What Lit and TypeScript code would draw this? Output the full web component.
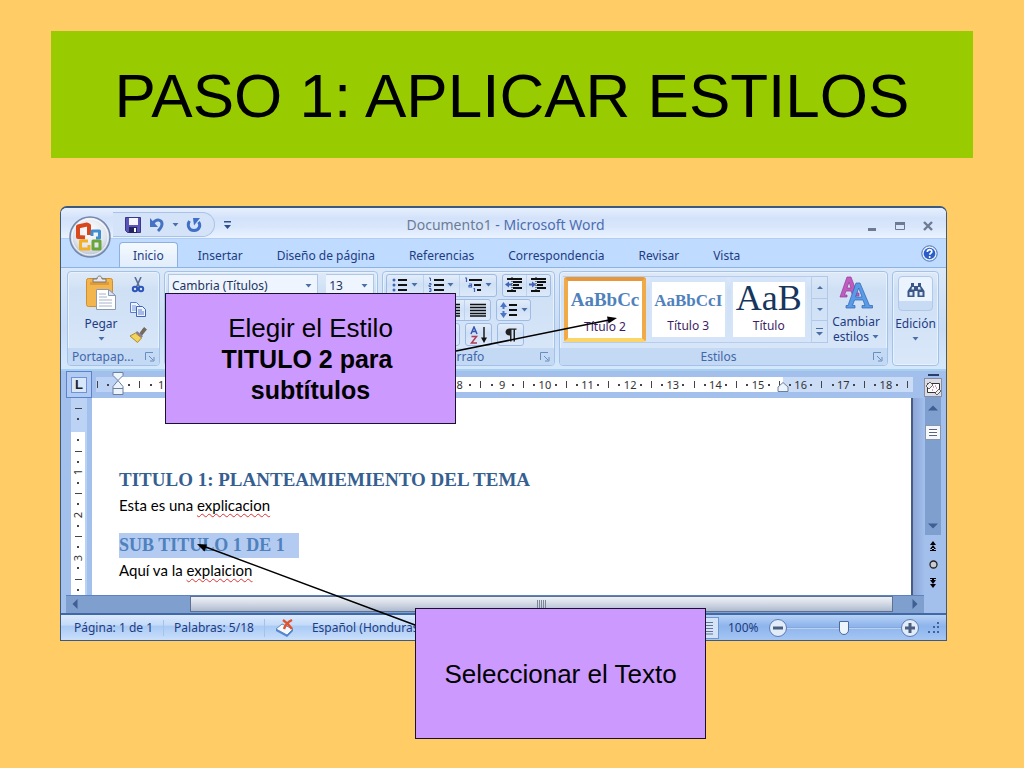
import { LitElement, html, css, svg } from "lit";
import { customElement } from "lit/decorators.js";

const caret = html`<svg class="caret" viewBox="0 0 7 4" width="7" height="4" aria-hidden="true"><path d="M.5 0h6L3.5 3.500z" fill="#4a6fa8"/></svg>`;

const launcher = html`<button class="plain launcher" aria-label="Más opciones"><svg width="10" height="10" viewBox="0 0 10 10"><path d="M.5 8V.5H8M4 4l4 4M9 5v4H5" fill="none" stroke="#6a8cbf"/></svg></button>`;

const bars = (rows: number[][]) =>
  svg`${rows.map(([x, y, w]) => svg`<rect x=${x} y=${y} width=${w} height="2" fill="#111"/>`)}`;

const icons = {
  save: html`<svg width="16" height="16" viewBox="0 0 16 16"><path d="M.5.5h15v15H2.5l-2-2z" fill="#5a55b8" stroke="#3a3688"/><path d="M4 1h9v7H4z" fill="#f4f6ff"/><path d="M4 10h8v6H4z" fill="#26235e"/><path d="M9 11h2v4H9z" fill="#fff"/></svg>`,
  undo: html`<svg width="16" height="16" viewBox="0 0 16 16"><path d="M4 6c4-5 9-3 9 1 0 3-2 5-4 7" fill="none" stroke="#4573c4" stroke-width="3"/><path d="M1 1v9h8z" fill="#4573c4"/></svg>`,
  redo: html`<svg width="16" height="16" viewBox="0 0 16 16"><path d="M3.500 4C1 8 2.500 13.500 8 13.500S15 8 12.500 5" fill="none" stroke="#3f6fc6" stroke-width="3"/><path d="M7 1h7L8 8.500z" fill="#3f6fc6"/></svg>`,
  qatMore: html`<svg width="7" height="8" viewBox="0 0 7 8"><path d="M0 0h7v1.500H0zM0 4h7L3.500 8z" fill="#2d4f8e"/></svg>`,
  galleryMore: html`<svg width="7" height="8" viewBox="0 0 7 8"><path d="M0 0h7v1H0zM0 4h7L3.500 7.500z" fill="#4a6fa8"/></svg>`,
  paste: html`<svg width="32" height="36" viewBox="0 0 32 36"><rect x="1.5" y="3.500" width="26" height="28" rx="2" fill="#f3b64e" stroke="#cf8f2e"/><path d="M5 7h19v3H5z" fill="#e09a38"/><path d="M8 7V4h4c0-4 5-4 5 0h4v3z" fill="#e8e8ea" stroke="#777"/><path d="M11.500 14.500h12l7 6v14h-19z" fill="#fff" stroke="#8a9ab4"/><path d="M23.500 14.500v6h7z" fill="#dbe4f2" stroke="#8a9ab4"/><path d="M14 19h7M14 22h8M14 25h13M14 28h13M14 31h13" stroke="#a6b3ca"/></svg>`,
  cut: html`<svg width="14" height="16" viewBox="0 0 14 16"><path d="M4 0l4.500 10M10 0L5.500 10" stroke="#5a6f94" stroke-width="1.600"/><circle cx="4" cy="12" r="2.200" fill="none" stroke="#2d56b8" stroke-width="2"/><circle cx="10" cy="12" r="2.200" fill="none" stroke="#2d56b8" stroke-width="2"/></svg>`,
  copy: html`<svg width="18" height="15" viewBox="0 0 18 15"><path d="M1.500.5h6l3 3v7h-9z" fill="#eef4ff" stroke="#5b7fd0"/><path d="M3 4h4M3 6h5M3 8h5" stroke="#7799dd"/><path d="M7.500 4.500h6l3 3v7h-9z" fill="#eef4ff" stroke="#3f63b8"/><path d="M9 8h4M9 10h6M9 12h6" stroke="#5b7fd0"/></svg>`,
  brush: html`<svg width="18" height="16" viewBox="0 0 18 16"><path d="M11 6l4-5.500 2.500 2L13 8z" fill="#7a6a58" stroke="#54483c" stroke-width=".6"/><path d="M8 4l6 5-1.500 2L6.500 6z" fill="#8a7d9a"/><path d="M6.500 6l6 5-4 4.500L1 9z" fill="#f2d35c" stroke="#b08a2a"/></svg>`,
  bullets: html`<svg width="16" height="16" viewBox="0 0 16 16">${bars([[6, 2, 9], [6, 7, 9], [6, 12, 9]])}<g fill="#3f63b8"><circle cx="2" cy="3" r="1.500"/><circle cx="2" cy="8" r="1.500"/><circle cx="2" cy="13" r="1.500"/></g></svg>`,
  numbers: html`<svg width="16" height="16" viewBox="0 0 16 16">${bars([[6, 2, 10], [6, 7, 10], [6, 12, 10]])}<path d="M1 1h1.500v3M1 6.500h2v1.500H1v1.500h2M1 11.500h2v3H1M1.500 13H3" fill="none" stroke="#3f63b8"/></svg>`,
  levels: html`<svg width="18" height="16" viewBox="0 0 18 16">${bars([[5, 2, 13], [10, 7, 7], [13, 12, 4]])}<path d="M1 1h1.500v4M5 7h2.500v3H5V8.500h2M9.500 11.500h1V15" fill="none" stroke="#3f63b8" stroke-width="1.200"/></svg>`,
  outdent: html`<svg width="18" height="16" viewBox="0 0 18 16">${bars([[2, 1, 15], [8, 4, 9], [8, 7, 6], [8, 10, 9], [2, 13, 9]])}<path d="M7 0v16" stroke="#111" stroke-dasharray="1 1"/><path d="M0 7.500l4-3v2h3v2H4v2z" fill="#3f63b8"/></svg>`,
  indent: html`<svg width="18" height="16" viewBox="0 0 18 16">${bars([[2, 1, 15], [8, 4, 9], [8, 7, 6], [8, 10, 9], [2, 13, 9]])}<path d="M7 0v16" stroke="#111" stroke-dasharray="1 1"/><path d="M7 7.500l-4-3v2H0v2h3v2z" fill="#3f63b8"/></svg>`,
  justify: html`<svg width="16" height="14" viewBox="0 0 16 14"><path d="M0 1.500h16M0 4.500h16M0 7.500h16M0 10.500h16M0 13h16" stroke="#111" stroke-width="1.600"/></svg>`,
  spacing: html`<svg width="18" height="18" viewBox="0 0 18 18">${bars([[9, 3, 8], [9, 8, 8], [9, 13, 8]])}<path d="M0 6l3.500-5L7 6H4.500v2h-2V6zM0 12l3.500 5L7 12H4.500v-2h-2v2z" fill="#4a74c8"/></svg>`,
  sort: html`<svg width="18" height="18" viewBox="0 0 18 18"><path d="M1 8l3-7 3 7M2.500 5.500h3.500" fill="none" stroke="#3355b0" stroke-width="1.500"/><path d="M1.500 10.500h5L1.500 17h5.500" fill="none" stroke="#b03a54" stroke-width="1.500"/><path d="M14 1v13" stroke="#111" stroke-width="1.400"/><path d="M11 11.500h6L14 17z" fill="#111"/></svg>`,
  pilcrow: html`<svg width="12" height="14" viewBox="0 0 12 14"><path d="M5 7.500C-1 7.500-1 .5 5 .5h6.500v1.300H10V13.500H8.500V1.800H6.500V13.500H5z" fill="#222"/></svg>`,
  changeStyles: html`<svg width="34" height="33" viewBox="0 0 34 33"><path d="M1 21L8 1h4l6 16h2v3h-6l-2-5H7l-1.500 4H8v2zM8 12h4L10 6z" fill="#c15bbf" stroke="#8f3b96" stroke-width=".7"/><path d="M7 32v-2.500h2L17 7h4l9.500 22.500h3V32H23v-2.500h3L24 24h-8.500l-2 5.500H16V32zM16.500 21H23l-3.300-9z" fill="#5a9be6" stroke="#2f62b4" stroke-width=".7"/></svg>`,
  find: html`<svg width="18" height="16" viewBox="0 0 18 16"><path d="M4 1h3v3h4V1h3v3l3.500 5v6h-7V9h-3v6h-7V9L4 4z" fill="#3a5788"/><path d="M2.500 10h3v3.500h-3zM12.500 10h3v3.500h-3zM5 5h2v2.500H4.500zM11 5h2l.8 2.500H11z" fill="#dde9fa"/></svg>`,
  help: html`<svg width="17" height="17" viewBox="0 0 17 17"><circle cx="8.500" cy="8.500" r="7.700" fill="#e6f0fd" stroke="#4a6fb0"/><circle cx="8.500" cy="8.500" r="5.800" fill="#2a5fc9"/><path d="M6.300 7c0-3.200 4.800-3 4.500-.2-.2 1.400-2 1.400-2 3" fill="none" stroke="#fff" stroke-width="1.700"/><circle cx="8.700" cy="11.900" r="1" fill="#fff"/></svg>`,
  office: html`<svg width="42" height="42" viewBox="0 0 42 42"><defs><radialGradient id="orb" cx=".5" cy=".35" r=".7"><stop offset="0" stop-color="#fff"/><stop offset=".6" stop-color="#dfe4ee"/><stop offset="1" stop-color="#a9b6cc"/></radialGradient></defs><circle cx="21" cy="21" r="20" fill="url(#orb)" stroke="#7388ac" stroke-width="1.500"/><circle cx="21" cy="21" r="18" fill="none" stroke="#fff" opacity=".8"/><g fill="none" stroke-linejoin="round"><path d="M20 19V9.500L18 8.500 9 10.500v10.500l7 .5" stroke="#d8481c" stroke-width="4"/><path d="M23 20v-5h7.500v7H27" stroke="#3f8fd0" stroke-width="3"/><path d="M19 25h-7.500v8H20v-4" stroke="#f3b022" stroke-width="3"/><path d="M24 25h7v8h-7z" stroke="#6aa53a" stroke-width="3"/></g></svg>`,
  proof: html`<svg width="20" height="18" viewBox="0 0 20 18"><path d="M1 10l6-5 11 5-6 6z" fill="#f4f8ff" stroke="#6a86b8"/><path d="M1 10v2l11 6 6-6v-2l-6 6z" fill="#4f86d2"/><path d="M8 1c3 2 7 6 9 9M17 1c-4 2-7 6-8 9" stroke="#e0522c" stroke-width="2.400" fill="none"/></svg>`,
  printLayout: html`<svg width="14" height="14" viewBox="0 0 14 14"><path d="M0 1.500h14M0 4.500h14M0 7.500h14M0 10.500h14M0 13h14" stroke="#5f7592"/></svg>`,
  rulerToggle: html`<svg width="15" height="14" viewBox="0 0 15 14"><path d="M1.500 2.500h12v9h-12z" fill="#fff" stroke="#333"/><path d="M0 5l4-4 3 3-4 4zM9 12l4-4 2 2-4 4z" fill="#eee" stroke="#444" stroke-width=".8"/><path d="M7 6h1M9 5h1M6 9h1M10 7h1" stroke="#b23a8a"/></svg>`,
  tri: (d: string) => html`<svg width="10" height="10" viewBox="0 0 10 10"><path d=${d} fill="#3f5f94"/></svg>`,
};

const UP = "M0 7.500h10L5 2.500z";
const DOWN = "M0 2.500h10L5 7.500z";
const LEFT = "M7.500 0v10L2.500 5z";
const RIGHT = "M2.500 0v10L7.500 5z";

/** Ruler marks at quarter-centimetre steps, starting half a centimetre before zero. Numbers behind a callout are left out. */
const marks = (count: number, covered: [number, number] = [0, 0]) =>
  Array.from({ length: count }, (_, i) => {
    const q = i - 2;
    const n = q / 4;
    if (q === 0 || (q % 4 === 0 && n >= covered[0] && n <= covered[1])) return html`<span class="mark"></span>`;
    if (q > 0 && q % 4 === 0) return html`<span class="mark"><span class="num">${n}</span></span>`;
    return html`<span class="mark"><i class=${q % 2 === 0 ? "half" : "dot"}></i></span>`;
  });

@customElement("app-root")
export class AppRoot extends LitElement {
  static styles = css`
    :host { display: block; min-height: 100vh; background: #ffcc66; font-family: "Liberation Sans", sans-serif; color: #000; }
    * { box-sizing: border-box; }
    svg { display: block; flex: none; }
    button, select, input { font: inherit; color: inherit; margin: 0; }
    button { padding: 0; border: 0; background: none; display: flex; align-items: center; justify-content: center; }
    .slide { display: flex; flex-direction: column; gap: 48px; padding: 31px 51px 0; }
    h1 { margin: 0; background: #99cc00; font-size: 62px; font-weight: 400; line-height: 127px; height: 127px; padding-top: 1px; text-align: center; white-space: nowrap; }
    figure { position: relative; margin: 0 26px 0 9px; }

    .window { display: flex; flex-direction: column; border: 1px solid #3b5a82; border-top-width: 2px; border-radius: 7px 7px 0 0; background: #bfdbff; font: 12px/16px "Noto Sans", sans-serif; color: #1e3c82; overflow: hidden; white-space: nowrap; }
    .titlebar { display: grid; grid-template-columns: 1fr auto 1fr; align-items: center; height: 31px; background: linear-gradient(#e6effd, #d3e2fa 35%, #d8e6fb 60%, #e9f2ff); border-bottom: 1px solid #b3cdf0; }
    .caption { font-size: 14px; line-height: 20px; color: #4d6db0; padding: 4px 0 0 4px; }
    .caption span { color: #6d7c96; }
    .quick { display: flex; align-items: center; gap: 9px; padding: 3px 0 0 52px; }
    .pill { display: flex; align-items: center; gap: 8px; height: 25px; padding: 0 12px 0 12px; border: 1px solid #a9c2e8; border-left: 0; border-radius: 0 13px 13px 0; background: #d5e3f8; }
    .pill .caret { margin: 0 -1px; }
    .controls { display: flex; justify-content: flex-end; gap: 16px; padding: 6px 12px 0 0; }
    .orb { position: absolute; left: 9px; top: 10px; border-radius: 50%; }

    .tabs { display: flex; align-items: flex-end; gap: 6px; height: 28px; padding: 0 8px 0 58px; }
    .tab { height: 25px; padding: 2px 13px 0; border: 1px solid transparent; border-bottom: 0; border-radius: 4px 4px 0 0; }
    .tab.on { background: linear-gradient(#f4f9ff, #e1edfb); border-color: #8eb0e0; }
    .tabs .help { margin-left: auto; align-self: center; }

    .ribbon { display: flex; gap: 4px; height: 104px; padding: 3px 7px 3px 6px; border-top: 1px solid #8db2e3; background: linear-gradient(#dbe8f8, #c9dcf4 60%, #d5e8fb); border-bottom: 2px solid #a6cff0; }
    .group { display: flex; flex-direction: column; border: 1px solid #a3c2ea; border-radius: 4px; background: linear-gradient(#dfeaf8, #cfe0f5 20%, #d9e7f9); box-shadow: inset 0 0 0 1px #e8f2fd; min-width: 0; }
    .body { flex: 1; display: flex; min-height: 0; }
    .foot { display: flex; align-items: center; height: 17px; padding: 0 4px; background: #c4d9f3; color: #4266ab; border-radius: 0 0 3px 3px; }
    .foot .name { flex: 1; text-align: center; }
    .clip { width: 93px; } .font { width: 214px; } .para { width: 173px; } .styles { flex: 1; } .edit { width: 47px; }
    .big { flex-direction: column; justify-content: flex-start; gap: 5px; line-height: 16px; }
    .clip .big { width: 66px; padding-top: 3px; }
    .tools { display: flex; flex-direction: column; justify-content: space-around; align-items: center; width: 18px; margin-left: -5px; }
    .combos { display: flex; padding: 2px 3px; }
    .combo { position: relative; height: 23px; display: flex; align-items: center; border: 1px solid #b0c7e8; background: #eef5fe; }
    .combo select { appearance: none; border: 0; background: none; color: #23345e; width: 100%; height: 21px; padding: 0 3px; outline: 0; }
    .combo .caret { position: absolute; right: 5px; }
    .combo.face { width: 157px; } .combo.size { width: 50px; border-left: 0; }
    .rows { display: flex; flex-direction: column; gap: 2px; padding: 2px 3px; }
    .row { display: flex; gap: 5px; height: 23px; }
    .set { display: flex; border: 1px solid #9dbbe4; border-radius: 3px; background: linear-gradient(#e3edfa, #d0e0f5 45%, #dce9fa); }
    .set > button { flex: 1; gap: 6px; padding: 0 2px; }
    .set > button + button { border-left: 1px solid #bdd2ee; }
    .set.tight > button { gap: 3px; }
    .w35 { width: 35px; } .w27 { width: 27px; } .w49 { width: 50px; } .w74 { width: 74px; } .w105 { width: 105px; } .w112 { width: 112px; }
    .styles .body { padding: 4px 3px 5px; }
    .gallery { flex: 1; display: flex; align-items: stretch; gap: 4px; border: 1px solid #b6cdec; border-left: 0; padding: 0 4px 0 1px; }
    .style { flex: 1; flex-direction: column; justify-content: space-between; background: #fff; color: #3d1e66; border: 0 solid #d5e4f8; border-width: 5px 2px; overflow: hidden; min-width: 0; }
    .style.on { border: 4px solid #f2a73c; border-color: #e8973a #f0ab48 #fbd568; border-radius: 3px; flex: 0 0 82px; }
    .sample { font: 700 19px/28px "Liberation Serif", serif; color: #4f81bd; height: 34px; padding-top: 5px; }
    .sample.s3 { font-size: 17px; }
    .sample.tt { font: 400 36px/32px "Liberation Serif", serif; color: #17365d; padding: 0; }
    .style .label { height: 20px; line-height: 18px; }
    .scroll { display: flex; flex-direction: column; width: 16px; }
    .scroll button { flex: 1; border: 1px solid #b0c8ea; border-left: 0; }
    .scroll button + button { border-top: 0; }
    .change { width: 56px; gap: 5px; line-height: 15px; }
    .line { display: flex; align-items: center; justify-content: center; gap: 3px; }
    .tile { display: grid; place-items: start center; padding-top: 5px; width: 35px; height: 35px; border: 1px solid #b0c8ea; border-radius: 4px; background: linear-gradient(#eaf3fe 72%, #c7dbf4 72%); }
    .edit .big { flex: 1; padding-top: 4px; }

    .desk { display: grid; grid-template-columns: 31px 1fr 12px 16px; grid-template-rows: 27px auto; padding-right: 5px; background: #a3bfec; }
    .corner { grid-area: 1 / 1; border: 1px solid #5b82cf; background: #b3cbf1; margin: 0 0 0 5px; }
    .corner b { display: grid; place-items: center; width: 16px; height: 16px; border: 1px solid #6e93d6; background: #d9e7fb; font: 700 13px/14px "Liberation Sans"; color: #222; }
    .hruler { grid-area: 1 / 2; position: relative; align-self: center; height: 15px; display: flex; background: linear-gradient(90deg, #a3bfec 4px, #bdd3f5 4px, #bdd3f5 26px, #fff 26px, #fff 84.200%, #cbdcf6 84.200%); }
    .mark { flex: 1 1 0; min-width: 0; min-height: 0; display: flex; align-items: center; justify-content: center; font: 11px/14px "Noto Sans"; color: #333; }
    .mark i { background: #444; width: 1px; height: 7px; }
    .mark i.dot { width: 2px; height: 2px; }
    .stop { position: absolute; left: 20px; top: -5px; }
    .stop.end { left: 84.200%; top: 5px; margin-left: -6px; }
    .vruler { grid-area: 2 / 1; display: flex; flex-direction: column; margin: 0 5px 0 10px; padding-top: 5px; background: linear-gradient(#bdd3f5 34px, #fff 34px); border: 0 solid #b9d2f6; border-right-width: 2px; }
    .vruler .mark i { width: 7px; height: 1px; }
    .vruler .mark i.dot { width: 2px; height: 2px; }
    .vruler .num { writing-mode: vertical-rl; rotate: 180deg; }
    .page { grid-area: 2 / 2; height: 197px; padding: 69px 0 0 27px; background: #fff; border-right: 2px solid #4a5c80; color: #000; font: 15px/24px "Lato", sans-serif; }
    .page h2 { margin: 0; font: 700 19px/26px "Liberation Serif", serif; color: #365f91; }
    .page p { margin: 0; }
    .page h3 { margin: 16px 0 0; width: 180px; background: #b3cbf0; font: 700 18px/25px "Liberation Serif", serif; color: #4f81bd; }
    .bad { text-decoration: underline wavy #e03030 1px; text-underline-offset: 2px; text-decoration-skip-ink: none; }
    .gutter { grid-area: 2 / 3; background: linear-gradient(90deg, #8ba6d6, #a3bfec); }
    .side { grid-area: 1 / 4 / 3 / 5; display: flex; flex-direction: column; align-items: center; }
    .split { height: 2px; width: 11px; background: #27406e; margin: 3px 0 2px; }
    .toggle { width: 18px; height: 19px; border: 1px solid #888da0; background: #dcdce6; }
    .track { flex: 1; align-self: stretch; display: flex; flex-direction: column; align-items: center; padding: 6px 0 4px; gap: 12px; background: #7f9fce; }
    .track .thumb { width: 16px; height: 15px; padding: 3px; border: 1px solid #8895ab; background: repeating-linear-gradient(#58657e 0 1px, #fff 1px 3px) content-box, #f4f6fa; }
    .track svg:last-child { margin-top: auto; }
    .nav { display: flex; flex-direction: column; align-items: center; gap: 9px; padding: 6px 0 7px; }

    .hscroll { display: flex; align-items: center; height: 18px; margin: 0 22px 0 5px; border-top: 1px solid #5b82c4; border-bottom: 1px solid #7f9fce; background: #7f9fce; }
    .hscroll > svg { margin: 0 4px; }
    .hscroll .thumb { flex: 1; height: 16px; margin: 0 13px 0 106px; border: 1px solid #5d7191; background: linear-gradient(#eef1f6, #d5dbe6 45%, #aebace); display: grid; place-items: center; }
    .grip { width: 9px; height: 8px; background: repeating-linear-gradient(90deg, #7b8798 0 1px, transparent 1px 2px); }
    .under { background: #a3bfec; }

    .status { display: flex; align-items: center; height: 27px; border-top: 2px solid #4169a8; background: linear-gradient(#dceafd, #c4dbf9 40%, #a9caf5 45%, #cadffb); }
    .status > span { padding: 0 10px 0 13px; }
    .status > span + span { border-left: 1px solid #a6c2ea; padding: 0 10px; }
    .status .proofing { padding: 0 17px 0 10px; border-left: 1px solid #a6c2ea; }
    .view { margin-left: auto; display: flex; align-items: center; align-self: stretch; padding-right: 5px; background: linear-gradient(#b8d2f6, #8db4ec 45%, #a5c6f4); }
    .view .pl { width: 26px; height: 22px; border: 1px solid #6f96cf; background: #d5e3f8; margin-right: 9px; }
    .view label { width: 41px; }
    .round { width: 18px; height: 18px; border-radius: 50%; border: 1px solid #5a7db5; background: #e2ebf8; color: #4a5e80; }
    input[type="range"] { appearance: none; width: 114px; height: 20px; background: linear-gradient(#6d92cc, #d5e5fb) center / 100% 2px no-repeat; }
    input[type="range"]::-webkit-slider-thumb { appearance: none; width: 10px; height: 14px; background: linear-gradient(90deg, #eef4fc 44%, #8fa5c5 44% 56%, #eef4fc 56%); border: 1px solid #4b6a9c; border-radius: 1px 1px 5px 5px; }
    .size { margin-left: 8px; }

    .callout { position: absolute; display: flex; align-items: center; justify-content: center; width: 291px; height: 131px; border: 1px solid #1b1030; padding-top: 2px; background: #cc99ff; font-size: 26px; line-height: 31px; text-align: center; white-space: pre; }
    .callout b { font-weight: 700; font-size: 25px; }
    .first { left: 105px; top: 87px; }
    .second { left: 355px; top: 402px; }
    .arrows { position: absolute; left: 0; top: 0; pointer-events: none; overflow: visible; }
  `;

  private ribbon() {
    return html`
      <div class="ribbon">
        <section class="group clip">
          <div class="body">
            <button class="big">${icons.paste}<span>Pegar</span>${caret}</button>
            <div class="tools"><button aria-label="Cortar">${icons.cut}</button><button aria-label="Copiar">${icons.copy}</button><button aria-label="Copiar formato">${icons.brush}</button></div>
          </div>
          <div class="foot"><span>Portapap...</span><span class="name"></span>${launcher}</div>
        </section>
        <section class="group font">
          <div class="body combos">
            <div class="combo face"><select aria-label="Fuente"><option>Cambria (Títulos)</option></select>${caret}</div>
            <div class="combo size"><select aria-label="Tamaño"><option>13</option></select>${caret}</div>
          </div>
          <div class="foot"></div>
        </section>
        <section class="group para">
          <div class="body rows">
            <div class="row">
              <div class="set tight w112"><button aria-label="Viñetas">${icons.bullets}${caret}</button><button aria-label="Numeración">${icons.numbers}${caret}</button><button aria-label="Lista multinivel">${icons.levels}${caret}</button></div>
              <div class="set w49"><button aria-label="Disminuir sangría">${icons.outdent}</button><button aria-label="Aumentar sangría">${icons.indent}</button></div>
            </div>
            <div class="row">
              <div class="set w105">${["Izquierda", "Centrar", "Derecha", "Justificar"].map((n) => html`<button aria-label=${n}>${icons.justify}</button>`)}</div>
              <div class="set tight w35"><button aria-label="Interlineado">${icons.spacing}${caret}</button></div>
            </div>
            <div class="row">
              <div class="set w74"></div>
              <div class="set w27"><button aria-label="Ordenar">${icons.sort}</button></div>
              <div class="set w27"><button aria-label="Mostrar todo">${icons.pilcrow}</button></div>
            </div>
          </div>
          <div class="foot"><span class="name">Párrafo</span>${launcher}</div>
        </section>
        <section class="group styles">
          <div class="body">
            <div class="gallery">
              <button class="style on"><span class="sample">AaBbCc</span><span class="label">Título 2</span></button>
              <button class="style"><span class="sample s3">AaBbCcI</span><span class="label">Título 3</span></button>
              <button class="style"><span class="sample tt">AaB</span><span class="label">Título</span></button>
            </div>
            <div class="scroll">
              <button aria-label="Anterior"><svg width="6" height="3" viewBox="0 0 6 3"><path d="M0 3h6L3 0z" fill="#4a6fa8"/></svg></button>
              <button aria-label="Siguiente"><svg width="6" height="3" viewBox="0 0 6 3"><path d="M0 0h6L3 3z" fill="#4a6fa8"/></svg></button>
              <button aria-label="Más">${icons.galleryMore}</button>
            </div>
            <button class="big change">${icons.changeStyles}<span>Cambiar<span class="line">estilos ${caret}</span></span></button>
          </div>
          <div class="foot"><span class="name">Estilos</span>${launcher}</div>
        </section>
        <section class="group edit">
          <button class="big"><span class="tile">${icons.find}</span><span>Edición</span>${caret}</button>
        </section>
      </div>`;
  }

  private desk() {
    return html`
      <div class="desk">
        <button class="corner" aria-label="Tabulación"><b>L</b></button>
        <div class="hruler">
          ${marks(77, [2, 7])}
          <svg class="stop" width="12" height="24" viewBox="0 0 12 24"><path d="M1 .5h10v3l-5 5 5 6v8H1v-8l5-6-5-5zM1 16.500h10" fill="#eef4fd" stroke="#6b7f9f"/></svg>
          <svg class="stop end" width="12" height="10" viewBox="0 0 12 10"><path d="M1 9.500V5l5-4.500L11 5v4.500z" fill="#eef4fd" stroke="#6b7f9f"/></svg>
        </div>
        <div class="vruler">${marks(18)}</div>
        <article class="page">
          <h2>TITULO 1: PLANTEAMIEMIENTO DEL TEMA</h2>
          <p>Esta es una <span class="bad">explicacion</span></p>
          <h3>SUB TITULO 1 DE 1</h3>
          <p>Aquí va la <span class="bad">explaicion</span></p>
        </article>
        <div class="gutter"></div>
        <div class="side">
          <div class="split"></div>
          <button class="toggle" aria-label="Regla">${icons.rulerToggle}</button>
          <div class="track">${icons.tri(UP)}<div class="thumb"></div>${icons.tri(DOWN)}</div>
          <div class="nav">
            <svg width="8" height="10" viewBox="0 0 8 10"><path d="M1 4h6L4 0zM1 8h6L4 4zM3 7h2v2H3zM1 9h6v1H1z"/></svg>
            <svg width="9" height="9" viewBox="0 0 9 9"><circle cx="4.500" cy="4.500" r="3.500" fill="#c9cdd2" stroke="#222" stroke-width="1.300"/></svg>
            <svg width="8" height="10" viewBox="0 0 8 10"><path d="M1 6h6l-3 4zM1 2h6L4 6zM3 1h2v2H3zM1 0h6v1H1z"/></svg>
          </div>
        </div>
      </div>
      <div class="under"><div class="hscroll">${icons.tri(LEFT)}<div class="thumb"><div class="grip"></div></div>${icons.tri(RIGHT)}</div></div>`;
  }

  render() {
    return html`
      <main class="slide">
        <h1>PASO 1: APLICAR ESTILOS</h1>
        <figure>
          <div class="window">
            <header class="titlebar">
              <div class="quick">
                <div class="pill"><button aria-label="Guardar">${icons.save}</button><button aria-label="Deshacer">${icons.undo}</button>${caret}<button aria-label="Rehacer">${icons.redo}</button></div>
                <button aria-label="Personalizar">${icons.qatMore}</button>
              </div>
              <div class="caption"><span>Documento1</span> - Microsoft Word</div>
              <div class="controls">
                <button aria-label="Minimizar"><svg width="12" height="12" viewBox="0 0 12 12"><path d="M2 8h8v3H2z" fill="#6c7b93"/></svg></button>
                <button aria-label="Maximizar"><svg width="12" height="12" viewBox="0 0 12 12"><path d="M1.500 2.500h9v7h-9z" fill="none" stroke="#6c7b93"/><path d="M1 2h10v3H1z" fill="#6c7b93"/></svg></button>
                <button aria-label="Cerrar"><svg width="12" height="12" viewBox="0 0 12 12"><path d="M2 2l8 8M10 2l-8 8" stroke="#6c7b93" stroke-width="2.400"/></svg></button>
              </div>
            </header>
            <nav class="tabs">
              ${["Inicio", "Insertar", "Diseño de página", "Referencias", "Correspondencia", "Revisar", "Vista"].map(
                (t, i) => html`<button class="tab ${i === 0 ? "on" : ""}">${t}</button>`
              )}
              <button class="help" aria-label="Ayuda">${icons.help}</button>
            </nav>
            ${this.ribbon()} ${this.desk()}
            <footer class="status">
              <span>Página: 1 de 1</span><span>Palabras: 5/18</span>
              <button class="proofing" aria-label="Revisión">${icons.proof}</button>
              <div class="lang">Español (Honduras)</div>
              <div class="view">
                <button class="pl" aria-label="Diseño de impresión">${icons.printLayout}</button>
                <label for="zoom">100%</label>
                <button class="round" aria-label="Alejar"><svg width="10" height="10" viewBox="0 0 10 10"><path d="M0 3.500h10v3H0z" fill="#4a5e80"/></svg></button>
                <input id="zoom" type="range" min="0" max="100" value="50" />
                <button class="round" aria-label="Acercar"><svg width="10" height="10" viewBox="0 0 10 10"><path d="M0 3.500h10v3H0zM3.500 0h3v10h-3z" fill="#4a5e80"/></svg></button>
                <svg class="size" width="14" height="14" viewBox="0 0 14 14"><path d="M10 1h2v2h-2zM10 5h2v2h-2zM6 5h2v2H6zM10 10h2v2h-2zM6 10h2v2H6zM1 10h2v2H1z" fill="#3f62a0"/></svg>
              </div>
            </footer>
          </div>
          <button class="orb" aria-label="Botón de Office">${icons.office}</button>
          <div class="callout first"><div>Elegir el Estilo
<b>TITULO 2 para 
subtítulos</b></div></div>
          <div class="callout second">Seleccionar el Texto</div>
          <svg class="arrows" width="1" height="1" viewBox="0 0 1 1" aria-hidden="true">
            <path d="M396 145L549 114M355 419L143 340" stroke="#000" stroke-width="1.600"/>
            <path d="M557 112l-8.500 5.500-1.500-7zM137 338l10 .5-2.500 7z"/>
          </svg>
        </figure>
      </main>`;
  }
}
